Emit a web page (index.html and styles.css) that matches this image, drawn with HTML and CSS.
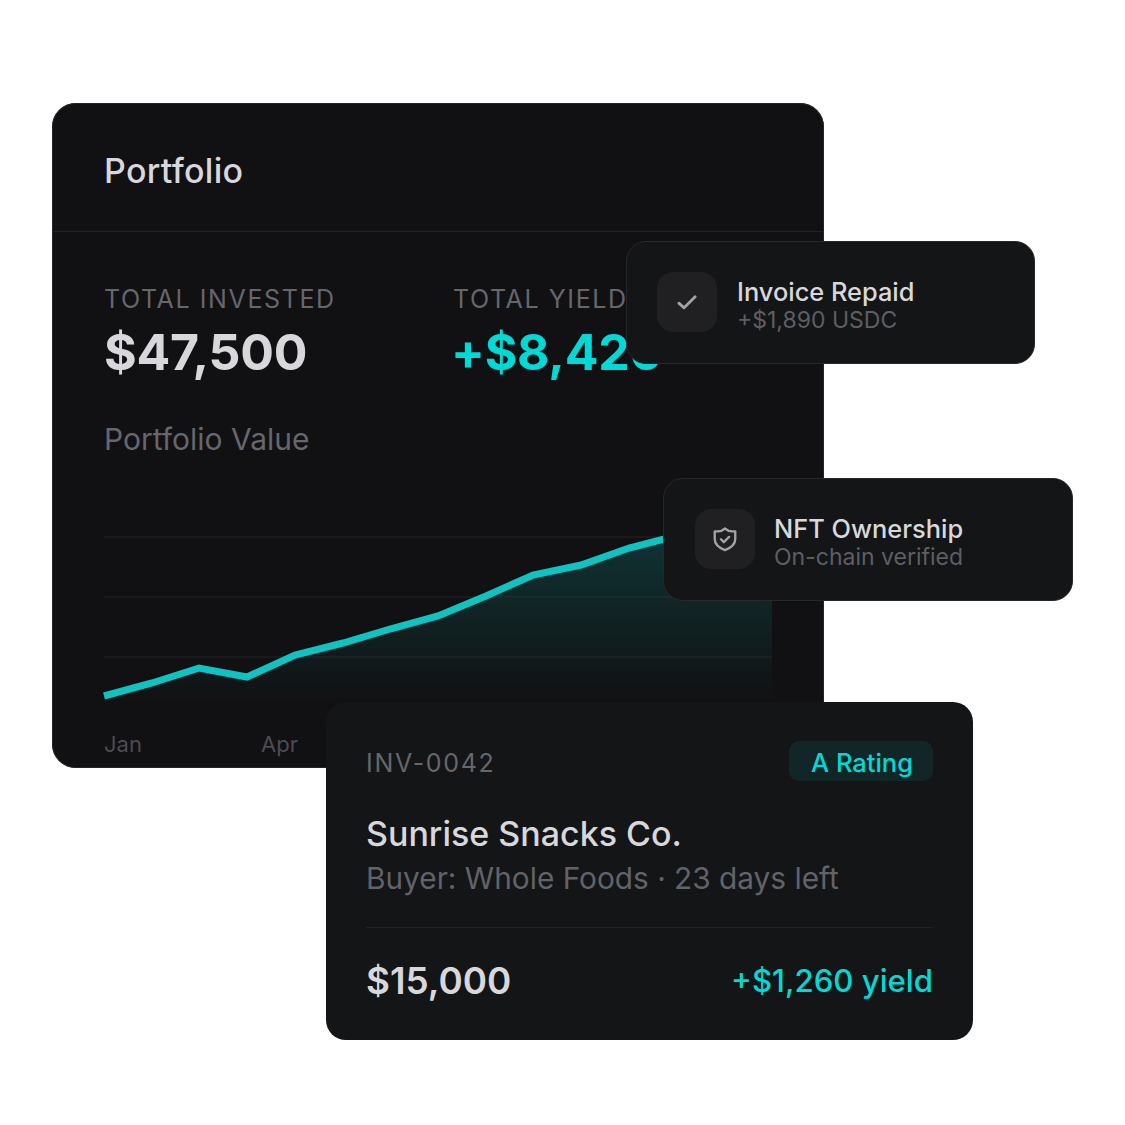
FILE: index.html
```html
<!DOCTYPE html>
<html lang="en">
<head>
    <meta charset="UTF-8">
    <meta name="viewport" content="width=device-width, initial-scale=1.0">
    <title>Portfolio</title>
    <link rel="stylesheet" href="styles.css">
</head>
<body>
    <div class="stage">
        <div class="portfolio">
            <div class="portfolio-head">Portfolio</div>
            <div class="portfolio-body">
                <div class="stats">
                    <div class="stat">
                        <div class="stat-label">TOTAL INVESTED</div>
                        <div class="stat-value">$47,500</div>
                    </div>
                    <div class="stat">
                        <div class="stat-label">TOTAL YIELD</div>
                        <div class="stat-value teal">+$8,420</div>
                    </div>
                </div>
                <div class="chart-title">Portfolio Value</div>
                <svg class="chart" width="668" height="200" viewBox="0 0 668 200">
                    <defs>
                        <linearGradient id="fade" x1="0" y1="0" x2="0" y2="1">
                            <stop offset="0" stop-color="#0f4a4a" stop-opacity="0.65"/>
                            <stop offset="1" stop-color="#0f4a4a" stop-opacity="0"/>
                        </linearGradient>
                    </defs>
                    <path class="grid" d="M0 7H668M0 67H668M0 127H668"/>
                    <path fill="url(#fade)" d="M0 166L48 153L95 138L143 147L191 125L239 113L286 99L334 86L382 66L429 45L477 35L525 18L572 6L620 -4L668 -12V172H0Z"/>
                    <path class="line" d="M0 166L48 153L95 138L143 147L191 125L239 113L286 99L334 86L382 66L429 45L477 35L525 18L572 6L620 -4L668 -12"/>
                </svg>
                <div class="months">
                    <span>Jan</span>
                    <span>Apr</span>
                </div>
            </div>
        </div>

        <div class="toast toast-repaid">
            <div class="toast-icon">
                <svg width="28" height="28" viewBox="0 0 24 24" fill="none" stroke="#a3a3a8" stroke-width="2.4" stroke-linecap="round" stroke-linejoin="round">
                    <path d="M5 13l4.5 4L19 7.5"/>
                </svg>
            </div>
            <div class="toast-text">
                <div class="toast-title">Invoice Repaid</div>
                <div class="toast-sub">+$1,890 USDC</div>
            </div>
        </div>

        <div class="toast toast-nft">
            <div class="toast-icon">
                <svg width="28" height="28" viewBox="0 0 24 24" fill="none" stroke="#a3a3a8" stroke-width="2" stroke-linecap="round" stroke-linejoin="round">
                    <path d="M12 3L15 5Q18 5.5 20.8 5.5V12C20.8 17 16.5 19.8 12 21.5C7.5 19.8 3.2 17 3.2 12V5.5Q6 5.5 9 5Z"/>
                    <path d="M8.5 12.2l2.5 2.5 4.5-4.5"/>
                </svg>
            </div>
            <div class="toast-text">
                <div class="toast-title">NFT Ownership</div>
                <div class="toast-sub">On-chain verified</div>
            </div>
        </div>

        <div class="invoice">
            <div class="invoice-top">
                <span class="invoice-id">INV-0042</span>
                <span class="badge">A Rating</span>
            </div>
            <div class="invoice-name">Sunrise Snacks Co.</div>
            <div class="invoice-buyer">Buyer: Whole Foods · 23 days left</div>
            <div class="invoice-foot">
                <span class="invoice-amount">$15,000</span>
                <span class="invoice-yield">+$1,260 yield</span>
            </div>
        </div>
    </div>
</body>
</html>
```

FILE: styles.css
```css
body {
    font-family: Inter, "Liberation Sans", sans-serif;
    margin: 0;
    background-color: #ffffff;
}
.stage {
    position: relative;
    width: 1125px;
    height: 1125px;
    overflow: hidden;
    padding: 103px 0 0 52px;
    box-sizing: border-box;
}
.portfolio {
    width: 772px;
    height: 665px;
    background: #111113;
    border-radius: 24px;
    box-shadow: inset 0 0 0 1px #252528;
    box-sizing: border-box;
    overflow: hidden;
}
.portfolio-head {
    height: 129px;
    box-sizing: border-box;
    padding: 48px 52px 0;
    border-bottom: 1px solid #222225;
    font-size: 34px;
    line-height: 40px;
    letter-spacing: 0.3px;
    font-weight: 500;
    color: #d8d8dc;
}
.portfolio-body {
    padding: 52px 52px 0;
}
.stats {
    display: flex;
    height: 103px;
}
.stat {
    flex: none;
    width: 349px;
}
.stat-label {
    font-size: 25px;
    line-height: 30px;
    letter-spacing: 1.6px;
    color: #66666c;
}
.stat-value {
    margin-top: 9px;
    font-size: 50px;
    line-height: 58px;
    letter-spacing: -0.3px;
    font-weight: 700;
    color: #d8d8dc;
}
.teal {
    margin-left: -2px;
    color: #00d9d5;
}
.chart-title {
    margin-top: 34px;
    font-size: 30px;
    line-height: 36px;
    color: #66666c;
}
.chart {
    display: block;
    margin-top: 73px;
    overflow: visible;
}
.grid {
    fill: none;
    stroke: #1a1a1d;
    stroke-width: 2;
}
.line {
    fill: none;
    stroke: #0fc4c0;
    stroke-width: 7;
}
.months {
    display: flex;
    gap: 119px;
    font-size: 22px;
    line-height: 28px;
    color: #4c4c52;
}
.months span {
    width: 38px;
}
.toast {
    position: absolute;
    display: flex;
    align-items: center;
    gap: 20px;
    width: 410px;
    height: 123px;
    box-sizing: border-box;
    padding: 0 31px 1px;
    background: #131517;
    border: 1px solid #28282c;
    border-radius: 20px;
}
.toast-repaid {
    left: 626px;
    top: 241px;
    width: 409px;
    padding: 0 30px 1px;
}
.toast-nft {
    left: 663px;
    top: 478px;
    gap: 19px;
}
.toast-text {
    padding-top: 8px;
}
.toast-icon {
    display: flex;
    align-items: center;
    justify-content: center;
    width: 60px;
    height: 60px;
    border-radius: 16px;
    background: #202023;
}
.toast-title {
    font-size: 25.4px;
    line-height: 28px;
    font-weight: 500;
    color: #d8d8dc;
}
.toast-sub {
    font-size: 23px;
    line-height: 28px;
    color: #5e5e64;
}
.invoice {
    position: absolute;
    left: 326px;
    top: 702px;
    width: 647px;
    height: 338px;
    box-sizing: border-box;
    padding: 39px 40px 0;
    background: #131517;
    border-radius: 20px;
}
.invoice-top {
    display: flex;
    justify-content: space-between;
    align-items: center;
}
.invoice-id {
    padding-top: 4px;
    font-size: 25px;
    letter-spacing: 1.7px;
    color: #66666c;
}
.badge {
    padding: 7px 20px 3px 22px;
    height: 30px;
    font-size: 25.5px;
    line-height: 30px;
    font-weight: 500;
    color: #00d9d5;
    background: #122628;
    border-radius: 10px;
}
.invoice-name {
    margin-top: 32px;
    font-size: 34px;
    line-height: 42px;
    font-weight: 500;
    color: #d8d8dc;
}
.invoice-buyer {
    margin-top: 5px;
    padding-bottom: 31px;
    border-bottom: 1px solid #212124;
    font-size: 29.8px;
    line-height: 36px;
    color: #626268;
}
.invoice-foot {
    display: flex;
    justify-content: space-between;
    align-items: center;
    margin-top: 30px;
}
.invoice-amount {
    font-size: 36.8px;
    line-height: 46px;
    font-weight: 600;
    color: #d8d8dc;
}
.invoice-yield {
    font-size: 31.2px;
    line-height: 46px;
    font-weight: 500;
    color: #00d9d5;
}
```
